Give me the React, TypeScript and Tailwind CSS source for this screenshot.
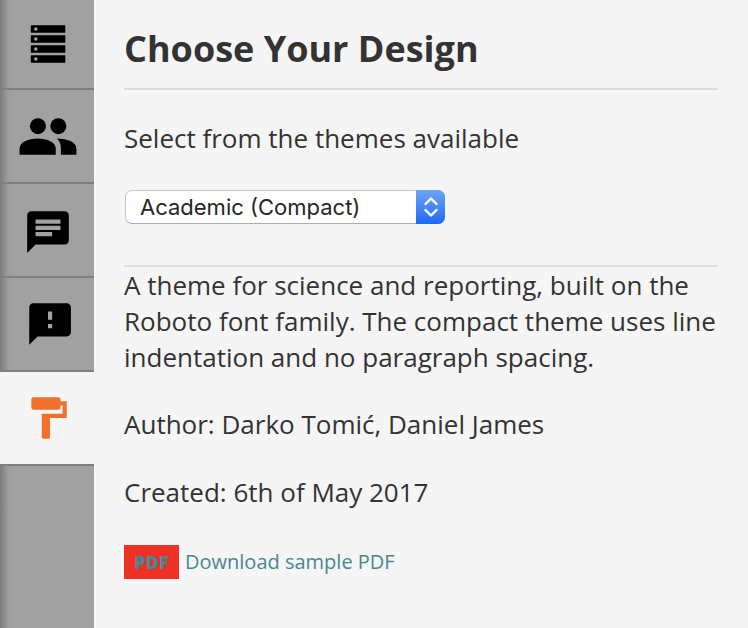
import { useState } from "react";
import type { ReactNode } from "react";
import clsx from "clsx";

interface Tab {
  id: string;
  label: string;
  icon: ReactNode;
}

const tabs: Tab[] = [
  {
    id: "structure",
    label: "Structure",
    icon: (
      <svg viewBox="0 0 36 38" className="w-9 h-[38px]" fill="currentColor" aria-hidden="true">
        {[0, 10, 20, 30].map((y) => (
          <g key={y}>
            <rect x="0.8" y={y + 0.3} width="34.5" height="7.4" rx="0.5" />
            <circle cx="5.8" cy={y + 4} r="1.8" className="fill-[#a1a1a1]" />
          </g>
        ))}
      </svg>
    ),
  },
  {
    id: "people",
    label: "People",
    icon: (
      <svg viewBox="0 0 24 24" className="w-[62px] h-[62px]" fill="currentColor" aria-hidden="true">
        <circle cx="8.1" cy="8.2" r="3.1" />
        <circle cx="16" cy="8.2" r="3.1" />
        <path d="M8 13c-3.6 0-7 1.5-7 3.8V19.3h14v-2.5C15 14.5 11.6 13 8 13z" />
        <path d="M15.4 13c1.1.9 1.6 2.3 1.6 3.8V19.3h6v-2.5c0-2.4-3.6-3.8-7.6-3.8z" />
      </svg>
    ),
  },
  {
    id: "chat",
    label: "Chat",
    icon: (
      <svg viewBox="0 -1 24 24" className="w-[50px] h-[50px]" fill="currentColor" aria-hidden="true">
        <path d="M20 2H4c-1.1 0-1.99.9-1.99 2L2 22l4-4h14c1.1 0 2-.9 2-2V4c0-1.1-.9-2-2-2zM6 9h12v2H6V9zm8 5H6v-2h8v2zm4-6H6V6h12v2z" />
      </svg>
    ),
  },
  {
    id: "issues",
    label: "Issues",
    icon: (
      <svg viewBox="-1 0 24 24" className="w-[50px] h-[50px]" fill="currentColor" aria-hidden="true">
        <path d="M20 2H4c-1.1 0-1.99.9-1.99 2L2 22l4-4h14c1.1 0 2-.9 2-2V4c0-1.1-.9-2-2-2zm-7 12h-2v-2h2v2zm0-4h-2V6h2v4z" />
      </svg>
    ),
  },
  {
    id: "design",
    label: "Design",
    icon: (
      <svg viewBox="0 0 24 24" className="w-[50px] h-[50px]" fill="currentColor" aria-hidden="true">
        <path d="M18 4V3c0-.55-.45-1-1-1H5c-.55 0-1 .45-1 1v4c0 .55.45 1 1 1h12c.55 0 1-.45 1-1V6h1v4H9v11c0 .55.45 1 1 1h2c.55 0 1-.45 1-1v-9h8V4h-3z" />
      </svg>
    ),
  },
];

const themes = ["Academic (Compact)"];

function Sidebar({ active, onSelect }: { active: string; onSelect: (id: string) => void }) {
  return (
    <nav className="w-[94px] shrink-0 bg-[#a1a1a1] bg-linear-to-r from-[#7c7c7c] via-[#9c9c9c] via-[8px] to-[#a1a1a1] to-[14px]">
      {tabs.map((tab, i) => (
        <button
          key={tab.id}
          type="button"
          aria-label={tab.label}
          onClick={() => onSelect(tab.id)}
          className={clsx(
            "flex items-center justify-center w-full pl-px border-b-2 border-[#7f7f7f]",
            i === 0 ? "h-[90px]" : "h-[94px]",
            tab.id === active ? "bg-[#f5f5f5] text-[#f0702d]" : "text-black"
          )}
        >
          {tab.icon}
        </button>
      ))}
    </nav>
  );
}

export default function App() {
  const [active, setActive] = useState("design");
  const [theme, setTheme] = useState(themes[0]);

  return (
    <div className="flex min-h-screen bg-[#f5f5f5] text-[#333] font-['Open_Sans',sans-serif]">
      <Sidebar active={active} onSelect={setActive} />

      <main className="flex-1 min-w-0 px-[30px] pt-6 text-[26px] leading-9">
        <h1 className="text-[36px] leading-[50px] font-bold pb-[14px] border-b-2 border-[#dcdcdc]">
          Choose Your Design
        </h1>

        <label htmlFor="theme" className="block mt-[30px]">
          Select from the themes available
        </label>
        <div className="relative w-80 ml-px mt-[34px] mb-[41px]">
          <select
            id="theme"
            value={theme}
            onChange={(e) => setTheme(e.target.value)}
            className="block appearance-none w-full h-[34px] pl-[14px] pr-8 rounded-[7px] bg-white border border-[#c8c8c8] border-b-[#acacac] text-[22px] leading-8 text-[#262626] font-[Inter,sans-serif]"
          >
            {themes.map((t) => (
              <option key={t}>{t}</option>
            ))}
          </select>
          <span className="absolute right-0 inset-y-0 w-[29px] rounded-r-[7px] bg-linear-to-b from-[#6ea4f7] to-[#1f68f5] flex items-center justify-center pointer-events-none">
            <svg viewBox="0 0 14 20" className="w-[14px] h-5" fill="none" stroke="white" strokeWidth="2.4" strokeLinecap="round" strokeLinejoin="round" aria-hidden="true">
              <path d="M1.5 7 7 1.5 12.5 7M1.5 13 7 18.5 12.5 13" />
            </svg>
          </span>
        </div>

        <section className="border-t-2 border-[#dcdcdc]">
          <p>
            A theme for science and reporting, built on the Roboto font family. The compact theme uses line
            indentation and no paragraph spacing.
          </p>
          <p className="mt-[31px]">Author: Darko Tomić, Daniel James</p>
          <p className="mt-8">Created: 6th of May 2017</p>
          <a href="#sample" className="inline-flex items-center gap-[6px] mt-[35px] text-[20px] leading-[34px] text-[#498793]">
            <span className="bg-[#ee3124] w-[55px] text-center text-[18px] leading-[34px] font-extrabold">PDF</span>
            Download sample PDF
          </a>
        </section>
      </main>
    </div>
  );
}
